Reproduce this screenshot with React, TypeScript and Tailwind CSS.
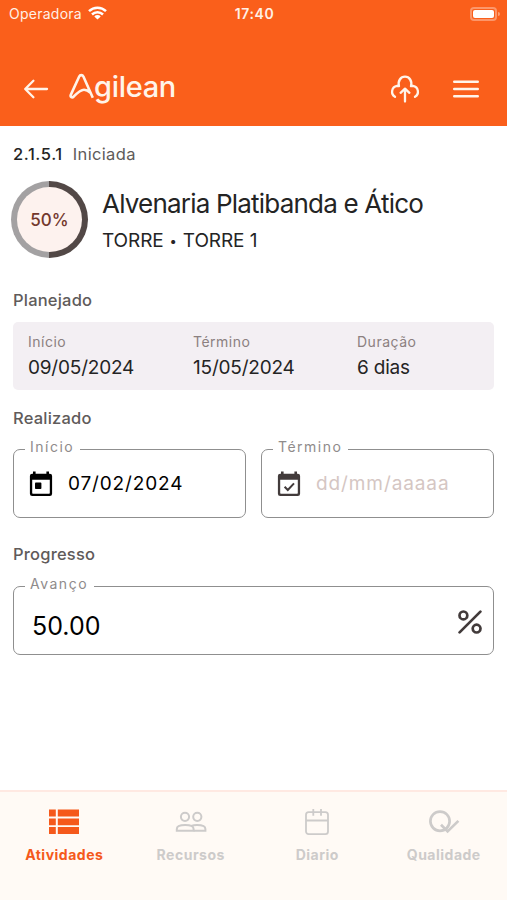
import React from "react";

const tabs = [
  { label: "Atividades", icon: <ListIcon />, active: true },
  { label: "Recursos", icon: <PeopleIcon />, active: false },
  { label: "Diario", icon: <DiaryIcon />, active: false },
  { label: "Qualidade", icon: <QualityIcon />, active: false },
];

const planned = [
  { label: "Início", value: "09/05/2024" },
  { label: "Término", value: "15/05/2024" },
  { label: "Duração", value: "6 dias" },
];

function ListIcon() {
  return (
    <svg width="30" height="26" viewBox="0 0 30 26" fill="currentColor">
      <path d="M0 .5h6.8v7H0zM8.8.5H30v7H8.8zM0 9.4h6.8v6.8H0zM8.8 9.4H30v6.8H8.8zM0 18h6.8v7H0zM8.8 18H30v7H8.8z" />
    </svg>
  );
}

function PeopleIcon() {
  return (
    <svg width="32" height="26" viewBox="0 0 32 26" fill="none" stroke="currentColor" strokeWidth="2">
      <circle cx="10" cy="7.8" r="4.1" />
      <circle cx="22.3" cy="7.8" r="4.1" />
      <path d="M1.8 21.8v-1.9c0-2.4 3.8-3.8 8.4-3.8s8.4 1.4 8.4 3.8v1.9z" />
      <path d="M16.2 17c1.6-.6 3.6-.9 5.8-.9 4.6 0 8.4 1.4 8.4 3.8v1.9H18.6" />
    </svg>
  );
}

function DiaryIcon() {
  return (
    <svg width="24" height="28" viewBox="0 0 24 28" fill="none" stroke="currentColor" strokeWidth="1.8">
      <rect x="1" y="4.2" width="22" height="22" rx="2.6" />
      <path d="M1 12.5h22M8.3 1v6.8M16 1v6.8" />
    </svg>
  );
}

function QualityIcon() {
  return (
    <svg width="32" height="26" viewBox="0 0 32 26" fill="none" stroke="currentColor" strokeWidth="2.7">
      <circle cx="12" cy="12.2" r="9.6" />
      <path d="M13 15.8l6.6 6.6L30.4 11.9" />
    </svg>
  );
}

function CalendarIcon({ checked = false }: { checked?: boolean }) {
  return (
    <svg width="24" height="26" viewBox="0 0 24 26" fill="none">
      <path
        fill="currentColor"
        fillRule="evenodd"
        d="M4 .5h2.6v2.3h10.8V.5H20v2.3h.8a2.3 2.3 0 0 1 2.3 2.3v17.6a2.3 2.3 0 0 1-2.3 2.3H3.2A2.3 2.3 0 0 1 .9 22.7V5.1a2.3 2.3 0 0 1 2.3-2.3H4zM3.2 8.8V22a.7.7 0 0 0 .7.7h16.2a.7.7 0 0 0 .7-.7V8.8z"
      />
      {checked ? (
        <path d="M7.6 15.8l3.2 3.2 6.2-6.6" stroke="currentColor" strokeWidth="2" />
      ) : (
        <rect x="6" y="11.6" width="6.4" height="6.4" rx="0.8" fill="currentColor" />
      )}
    </svg>
  );
}

function CloudUpload() {
  return (
    <svg width="30" height="28" viewBox="0 0 30 28" fill="none" stroke="currentColor" strokeWidth="2.3" strokeLinecap="round" strokeLinejoin="round">
      <path d="M5 21.8A5.9 5.9 0 0 1 7 10.9L9 11.2C7.6 6 10.6 1.7 15 1.7S22.4 6 21 11.2L23 10.9A5.9 5.9 0 0 1 25 21.8" />
      <path d="M15 26.5V14M10.6 17.8l4.4-4.2 4.4 4.2" />
    </svg>
  );
}

function Logo() {
  return (
    <div className="flex items-center text-[#fff4ea]">
      <svg className="-mt-1" width="25" height="28" viewBox="0 0 25 28" fill="none" stroke="currentColor" strokeWidth="2.6" strokeLinejoin="round">
        <path d="M23.8 24.8L14.4 3.5C13.5 1.6 11.1 1.6 10.2 3.5L1.9 21.6c-1.1 2.5 1.2 3.6 2.9 1.9 3.6-3.7 6.6-6.8 10.2-6.8 2.4 0 4.3 1.1 6.5 3.1" />
      </svg>
      <span className="-mt-[5px] font-['Inter',sans-serif] text-[29px] leading-7 font-medium tracking-[-0.3px]">gilean</span>
    </div>
  );
}

function StatusBar() {
  return (
    <div className="grid h-[27px] grid-cols-3 items-center pr-[7px] pl-[9px] text-[14px] text-[#fff0e6]">
      <div className="flex items-center gap-1.5">
        <span className="tracking-[0.25px]">Operadora</span>
        <svg className="-mt-px" width="19" height="14" viewBox="0 0 19 14" fill="none" stroke="#fff" strokeWidth="2.5">
          <path d="M1 5.2a12.2 12.2 0 0 1 17 0M4 8.5a8 8 0 0 1 11 0" />
          <path d="M9.5 13.6L6.3 10.4a4.6 4.6 0 0 1 6.4 0z" fill="#fff" stroke="none" />
        </svg>
      </div>
      <span className="text-center font-semibold tracking-[0.6px]">17:40</span>
      <div className="flex items-center justify-end gap-px">
        <span className="h-[14px] w-[27px] rounded-[4px] border-2 border-white/35 p-px">
          <span className="block h-full w-full rounded-[2px] bg-white" />
        </span>
        <span className="h-1 w-[2px] rounded-r bg-white/40" />
      </div>
    </div>
  );
}

function SectionTitle({ children }: { children: React.ReactNode }) {
  return <h2 className="h-6 text-[16.5px] leading-6 font-medium tracking-[0.2px] text-[#605b5a]">{children}</h2>;
}

function Field({ label, children }: { label: string; children: React.ReactNode }) {
  return (
    <fieldset className="h-[77px] min-w-0 flex-1 rounded-[7px] border border-[#8f8f8f] pl-[11px]">
      <legend className="h-4 pr-[6px] pl-[5px] text-[14px] leading-[12px] tracking-[1.5px] text-[#8f8b8b]">{label}</legend>
      {children}
    </fieldset>
  );
}

const App: React.FC = () => {
  return (
    <div className="flex h-[900px] w-[507px] flex-col overflow-hidden bg-white font-['Inter',sans-serif] text-[#242424]">
      <header className="h-[126px] bg-[#fa5f1b]">
        <StatusBar />
        <div className="mt-[46px] flex h-8 items-center pr-[28px] pl-[23px] text-[#fff4ea]">
          <svg width="26" height="20" viewBox="0 0 26 20" fill="none" stroke="currentColor" strokeWidth="2.3" strokeLinecap="round" strokeLinejoin="round">
            <path d="M24 10H2.4M10.4 1.8L2.2 10l8.2 8.2" />
          </svg>
          <div className="ml-5">
            <Logo />
          </div>
          <div className="ml-auto flex items-center gap-[33px]">
            <CloudUpload />
            <svg width="26" height="20" viewBox="0 0 26 20" stroke="currentColor" strokeWidth="2.4" strokeLinecap="round">
              <path d="M1.2 2.8h23.6M1.2 10h23.6M1.2 17.2h23.6" />
            </svg>
          </div>
        </div>
      </header>

      <main className="flex-1 px-[13px] pt-4">
        <div className="flex h-6 items-center gap-2.5 text-[16.5px]">
          <span className="font-medium tracking-[0.6px]">2.1.5.1</span>
          <span className="tracking-[0.35px] text-[#605b5a]">Iniciada</span>
        </div>

        <div className="mt-[15px] -ml-[2px] flex h-[77px] items-center">
          <div className="flex size-[77px] items-center justify-center rounded-full bg-[linear-gradient(90deg,#a3a1a2_50%,#524846_50%)]">
            <div className="flex size-[65px] items-center justify-center rounded-full bg-[#fdf2ee] pt-0.5 text-[17px] font-medium text-[#73382c]">
              50%
            </div>
          </div>
          <div className="ml-[14px] pt-px">
            <h1 className="text-[26px] leading-8 tracking-[-0.8px]">Alvenaria Platibanda e Ático</h1>
            <p className="mt-[9px] flex h-6 items-center text-[19px] leading-6 tracking-[-0.1px]">
              TORRE<span className="mx-[6px] text-[13px]">•</span>TORRE 1
            </p>
          </div>
        </div>

        <div className="mt-[30px]">
          <SectionTitle>Planejado</SectionTitle>
        </div>
        <div className="mt-2.5 grid h-[68px] grid-cols-[165px_164px_1fr] rounded-[5px] bg-[#f3eff3] pt-2.5 pl-[15px]">
          {planned.map((p) => (
            <div key={p.label}>
              <div className="h-5 text-[14px] leading-5 tracking-[0.5px] text-[#8b8080]">{p.label}</div>
              <div className="mt-1 h-6 text-[19px] leading-6 tracking-[-0.2px]">{p.value}</div>
            </div>
          ))}
        </div>

        <div className="mt-4">
          <SectionTitle>Realizado</SectionTitle>
        </div>
        <div className="mt-[11px] flex gap-[15px]">
          <Field label="Início">
            <div className="flex h-[54px] items-center gap-[15px] pl-1 text-black">
              <CalendarIcon />
              <span className="pt-px text-[19px] tracking-[0.85px]">07/02/2024</span>
            </div>
          </Field>
          <Field label="Término">
            <div className="flex h-[54px] items-center gap-[15px] pl-1 text-[#423b3b]">
              <CalendarIcon checked />
              <span className="pt-px text-[19px] tracking-[0.9px] text-[#d5c6c3]">dd/mm/aaaaa</span>
            </div>
          </Field>
        </div>

        <div className="mt-6">
          <SectionTitle>Progresso</SectionTitle>
        </div>
        <div className="mt-3 flex">
          <Field label="Avanço">
            <div className="flex h-[64px] items-center justify-between pr-[11px] pl-[7px] text-black">
              <span className="pt-0.5 text-[25px]">50.00</span>
              <svg className="-mt-2" width="24" height="24" viewBox="0 0 24 24" fill="none" stroke="#423b3b" strokeWidth="2.7">
                <circle cx="5.4" cy="5.4" r="3.9" />
                <circle cx="18.6" cy="18.6" r="3.9" />
                <path d="M22.4 1.6L1.6 22.4" strokeLinecap="round" />
              </svg>
            </div>
          </Field>
        </div>
      </main>

      <nav className="grid h-[110px] grid-cols-4 border-t-2 border-[#ffe9e2] bg-[#fffaf5] pt-[14px] pl-px">
        {tabs.map((tab) => (
          <div
            key={tab.label}
            className={
              tab.active
                ? "flex flex-col items-center text-[#f5591b]"
                : "flex flex-col items-center text-[#cdcbca]"
            }
          >
            <div className="flex h-8 items-center">{tab.icon}</div>
            <span className="mt-[7px] text-[14px] leading-5 font-bold tracking-[0.5px]">{tab.label}</span>
          </div>
        ))}
      </nav>
    </div>
  );
};

export default App;
